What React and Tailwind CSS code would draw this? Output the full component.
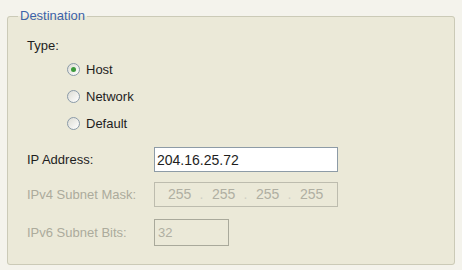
import React, { useState } from 'react';

const font = { fontFamily: '"Liberation Sans", Arial, sans-serif' };

const Radio = ({ label, checked, onSelect }) => (
    <div className="flex items-center h-[27px] cursor-default" onClick={onSelect}>
        <div className="w-[13px] h-[13px] rounded-full border border-[#8a9aa8] bg-gradient-to-br from-[#dcdcd4] to-white flex items-center justify-center">
            {checked && <div className="w-[5px] h-[5px] rounded-full bg-[#3c9a3c]" />}
        </div>
        <span className="ml-[6px] text-[13px] text-[#1e1e1e]">{label}</span>
    </div>
);

const Segment = ({ value }) => (
    <span className="w-[23px] text-center">{value}</span>
);

const Dot = () => <span className="w-[21px] text-center text-[#cfcfc4]">.</span>;

const App = () => {
    const [type, setType] = useState('Host');
    const [ip, setIp] = useState('204.16.25.72');

    return (
        <div className="w-[462px] h-[270px] bg-[#f4f3ec] pt-[9px] pl-[7px]" style={font}>
            <fieldset className="w-[448px] h-[256px] border border-[#cbcab7] rounded-[3px] bg-[#ebe9d8] pl-[19px]">
                <legend className="ml-[-9px] px-[2px] text-[13px] leading-[14px] text-[#3d62a8]">Destination</legend>

                <div className="h-[20px] mt-[13px] flex items-center text-[13px] text-[#1e1e1e]">Type:</div>

                <div className="ml-[40px] flex flex-col">
                    {['Host', 'Network', 'Default'].map((t) => (
                        <Radio key={t} label={t} checked={type === t} onSelect={() => setType(t)} />
                    ))}
                </div>

                <div className="mt-[10px] flex items-center h-[25px]">
                    <span className="w-[127px] text-[13px] text-[#1e1e1e]">IP Address:</span>
                    <input
                        type="text"
                        value={ip}
                        onChange={(e) => setIp(e.target.value)}
                        className="w-[184px] h-[25px] border border-[#8d9ba6] bg-white px-[2px] text-[14px] text-[#1e1e1e] outline-none"
                        style={font}
                    />
                </div>

                <div className="mt-[10px] flex items-center h-[25px]">
                    <span className="w-[127px] text-[13px] text-[#acab9c]">IPv4 Subnet Mask:</span>
                    <div className="w-[184px] h-[25px] border border-[#bdbcae] flex items-center pl-[13px] text-[14px] text-[#b0afa2]">
                        <Segment value="255" />
                        <Dot />
                        <Segment value="255" />
                        <Dot />
                        <Segment value="255" />
                        <Dot />
                        <Segment value="255" />
                    </div>
                </div>

                <div className="mt-[12px] flex items-center h-[27px]">
                    <span className="w-[127px] text-[13px] text-[#acab9c]">IPv6 Subnet Bits:</span>
                    <div className="w-[75px] h-[27px] border border-[#a9a99b] flex items-center px-[3px] text-[13px] text-[#b0afa2]">
                        32
                    </div>
                </div>
            </fieldset>
        </div>
    );
};

export default App;
